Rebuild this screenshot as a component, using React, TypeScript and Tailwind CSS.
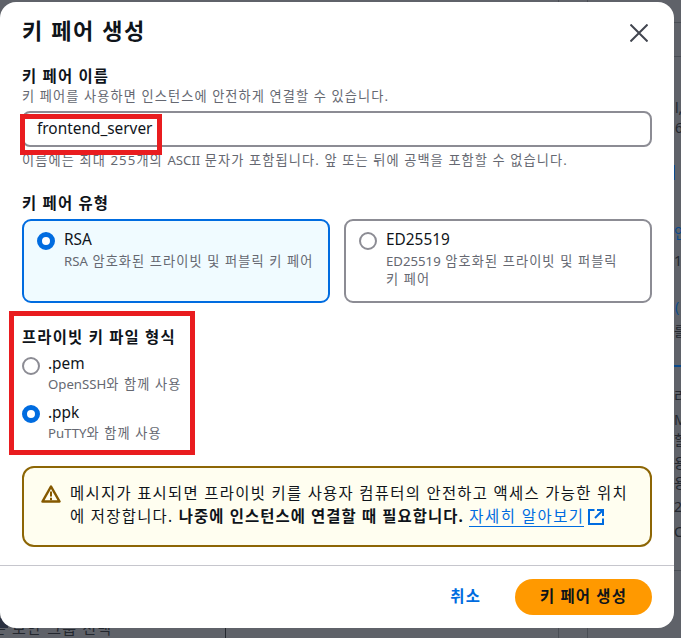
import type { ReactNode } from 'react';

const fontStack = { fontFamily: '"Noto Sans", "Noto Sans CJK KR", sans-serif' };

const labelClass = 'block text-[15.4px] font-bold leading-[22px] tracking-[1.2px] text-[#0f141a]';
const descClass = 'text-[13.2px] leading-[18px] tracking-[1.1px] text-[#656871]';

function Latin({ children }: { children: ReactNode }) {
  return <span className="tracking-normal">{children}</span>;
}

function Radio({ checked }: { checked: boolean }) {
  return checked ? (
    <span className="block h-[18px] w-[18px] shrink-0 rounded-full border-[5px] border-[#006ce0] bg-white" />
  ) : (
    <span className="block h-[18px] w-[18px] shrink-0 rounded-full border-2 border-[#8c8c94] bg-white" />
  );
}

function TypeCard({ title, desc, selected }: { title: string; desc: ReactNode; selected: boolean }) {
  return (
    <div
      className={`flex h-[84px] flex-1 gap-[9px] rounded-[9px] border-2 pl-[13px] pr-[8px] pt-[8px] ${
        selected ? 'border-[#006ce0] bg-[#f0fbff]' : 'border-[#8c8c94] bg-white'
      }`}
    >
      <div className="pt-[3px]">
        <Radio checked={selected} />
      </div>
      <div>
        <div className="text-[15.4px] leading-[22px] text-[#0f141a]">{title}</div>
        <div className={`mt-[1px] ${descClass}`}>{desc}</div>
      </div>
    </div>
  );
}

function FormatOption({ title, desc, checked, radioTop }: { title: string; desc: ReactNode; checked: boolean; radioTop: string }) {
  return (
    <div className="flex gap-[8px]">
      <div className={radioTop}>
        <Radio checked={checked} />
      </div>
      <div>
        <div className="text-[15.4px] leading-[22px] text-[#0f141a]">{title}</div>
        <div className={descClass}>{desc}</div>
      </div>
    </div>
  );
}

// the sliver of the page behind the modal that shows on the right
function RightStrip() {
  return (
    <div className="flex h-[626px] w-[7px] flex-col overflow-hidden whitespace-nowrap text-[14px] leading-[18px] text-[#23272e]">
      <div className="mt-[20px] h-[1px] shrink-0 bg-[#4a4e55]" />
      <div className="mt-[33px] h-[1px] shrink-0 bg-[#4a4e55]" />
      <div className="mt-[42px] pl-[1px]">l,</div>
      <div className="mt-[2px] pl-[1px]">6</div>
      <div className="mt-[28px] h-[15px] w-[1px] shrink-0 bg-[#0a4a8c]" />
      <div className="mt-[44px] text-[#0a4a8c]">인</div>
      <div className="mt-[10px]">1</div>
      <div className="mt-[28px] pl-[1px] text-[#0a4a8c]">(</div>
      <div className="mt-[6px]">를</div>
      <div className="mt-[25px] h-[2px] shrink-0 bg-[#0a4a8c]" />
      <div className="mt-[20px]">리</div>
      <div className="mt-[6px]">M</div>
      <div className="mt-[2px]">할</div>
      <div className="mt-[5px]">용</div>
      <div className="mt-[2px]">용</div>
      <div className="mt-[6px]">2</div>
      <div className="mt-[7px]">C</div>
      <div className="mt-[29px] h-[1px] shrink-0 bg-[#4a4e55]" />
    </div>
  );
}

export default function App() {
  return (
    <div className="relative flex h-[638px] w-[681px] flex-col overflow-hidden bg-[#5f6269]" style={fontStack}>
      <div className="flex h-[2px] pl-[558px]">
        <div className="w-[1px] bg-[#4a4e55]" />
        <div className="ml-[28px] w-[1px] bg-[#4a4e55]" />
      </div>

      <div className="relative z-10 flex">
        <div className="flex h-[626px] w-[674px] flex-col rounded-[16px] bg-white">
          <div className="flex items-start justify-between pl-[22px] pr-[26px] pt-[12px]">
            <h1 className="text-[22px] font-bold leading-[32px] tracking-[1.6px] text-[#0f141a]">키 페어 생성</h1>
            <svg className="mt-[10px]" width="18" height="18" viewBox="0 0 18 18" fill="none" stroke="#424650" strokeWidth="2">
              <path d="M0.5 0.5 L17.5 17.5 M17.5 0.5 L0.5 17.5" />
            </svg>
          </div>

          <div className="flex flex-1 flex-col px-[22px] pt-[20px]">
            <label className={labelClass}>키 페어 이름</label>
            <p className={`-mt-[1px] ${descClass}`}>키 페어를 사용하면 인스턴스에 안전하게 연결할 수 있습니다.</p>
            <div className="mt-[6px] flex h-[36px] items-center rounded-[8px] border-2 border-[#8c8c94] pl-[13px] text-[15.4px] text-[#0f141a]">
              frontend_server
            </div>
            <p className={`mt-[4px] ${descClass}`}>
              이름에는 최대 255개의 <Latin>ASCII</Latin> 문자가 포함됩니다. 앞 또는 뒤에 공백을 포함할 수 없습니다.
            </p>

            <label className={`mt-[24px] ${labelClass}`}>키 페어 유형</label>
            <div className="mt-[4px] flex gap-[14px]">
              <TypeCard title="RSA" desc={<><Latin>RSA</Latin> 암호화된 프라이빗 및 퍼블릭 키 페어</>} selected />
              <TypeCard title="ED25519" desc={<><Latin>ED25519</Latin> 암호화된 프라이빗 및 퍼블릭<br />키 페어</>} selected={false} />
            </div>

            <label className={`mt-[24px] ${labelClass}`}>프라이빗 키 파일 형식</label>
            <div className="mt-[4px] flex flex-col gap-[9px]">
              <FormatOption title=".pem" desc={<><Latin>OpenSSH</Latin>와 함께 사용</>} checked={false} radioTop="pt-[4px]" />
              <FormatOption title=".ppk" desc={<><Latin>PuTTY</Latin>와 함께 사용</>} checked radioTop="pt-[3px]" />
            </div>

            <div className="mt-[24px] flex h-[81px] gap-[9px] rounded-[12px] border-2 border-[#8d6605] bg-[#fffef0] pl-[17px] pr-[20px] pt-[14px]">
              <svg className="mt-[2px] shrink-0" width="20" height="20" viewBox="0 0 16 16" fill="none">
                <path d="M8 2 L14.8 14 H1.2 Z" stroke="#855900" strokeWidth="2" strokeLinejoin="round" />
                <path d="M8 6 V10 M8 11 V13" stroke="#855900" strokeWidth="1.6" />
              </svg>
              <p className="text-[15.4px] leading-[23px] tracking-[1.3px] text-[#0f141a]">
                메시지가 표시되면 프라이빗 키를 사용자 컴퓨터의 안전하고 액세스 가능한 위치에 저장합니다.{' '}
                <b className="font-bold tracking-[1.1px]">나중에 인스턴스에 연결할 때 필요합니다.</b>{' '}
                <span className="inline-flex items-center gap-[4px]">
                  <a className="border-b-[1px] border-[#006ce0] leading-[19px] tracking-[1.5px] text-[#006ce0]">자세히 알아보기</a>
                  <svg width="16" height="16" viewBox="0 0 16 16" fill="none" stroke="#006ce0" strokeWidth="2">
                    <path d="M6.5 1 H1 V15 H15 V9.5 M9 1 H15 V7 M15 1 L7 9" />
                  </svg>
                </span>
              </p>
            </div>
          </div>

          <div className="flex h-[63px] items-center justify-end gap-[34px] border-t border-[#c6c6cd] pr-[22px]">
            <button className="text-[15.4px] font-bold tracking-[1.2px] text-[#006ce0]">취소</button>
            <button className="h-[36px] w-[137px] rounded-full bg-[#ff9900] text-[15.4px] font-bold tracking-[1.2px] text-[#0f141a]">키 페어 생성</button>
          </div>
        </div>
        <RightStrip />
      </div>

      {/* bottom edge of the page behind; its text runs up under the modal */}
      <div className="flex h-[10px]">
        <div className="-ml-[8px] -mt-[9px] w-[233px] shrink-0 whitespace-nowrap text-[15px] leading-[18px] tracking-[1.2px] text-[#23272e]">은 보안 그룹 선택</div>
        <div className="w-[1px] bg-[#23272e]" />
        <div className="ml-[332px] w-[1px] bg-[#4a4e55]" />
        <div className="ml-[28px] w-[1px] bg-[#4a4e55]" />
      </div>

      {/* dark corner peeking out behind the modal */}
      <div className="absolute left-0 top-[618px] h-[10px] w-[8px] bg-[#2a3040]" />

      {/* red annotation boxes drawn over the screenshot */}
      <div className="absolute left-[20px] top-[114px] z-20 h-[41px] w-[142px] border-[5px] border-[#e91c1f]" />
      <div className="absolute left-[9px] top-[311px] z-20 h-[144px] w-[186px] border-[5px] border-[#e91c1f]" />
    </div>
  );
}
